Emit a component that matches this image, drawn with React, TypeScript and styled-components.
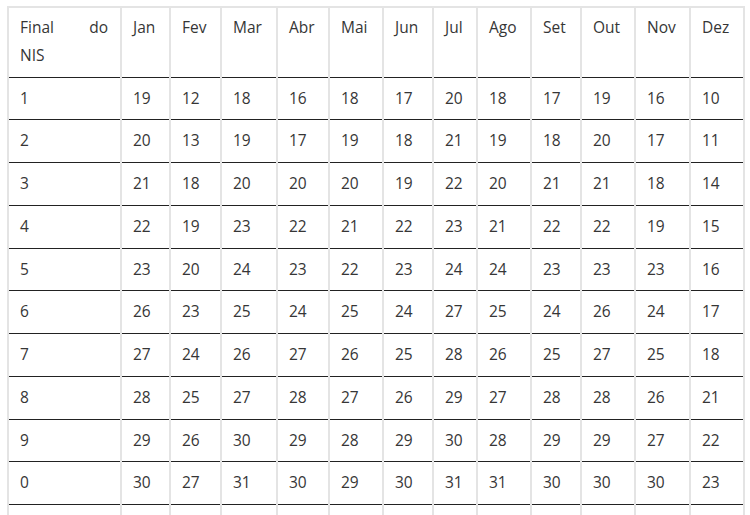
import React from 'react'
import styled, {createGlobalStyle} from 'styled-components'

const months = ['Jan', 'Fev', 'Mar', 'Abr', 'Mai', 'Jun', 'Jul', 'Ago', 'Set', 'Out', 'Nov', 'Dez']
const colWidths = [113, 49, 51, 56, 52, 54, 50, 44, 54, 50, 54, 55, 54]

const rows: [string, number[]][] = [
	['1', [19, 12, 18, 16, 18, 17, 20, 18, 17, 19, 16, 10]],
	['2', [20, 13, 19, 17, 19, 18, 21, 19, 18, 20, 17, 11]],
	['3', [21, 18, 20, 20, 20, 19, 22, 20, 21, 21, 18, 14]],
	['4', [22, 19, 23, 22, 21, 22, 23, 21, 22, 22, 19, 15]],
	['5', [23, 20, 24, 23, 22, 23, 24, 24, 23, 23, 23, 16]],
	['6', [26, 23, 25, 24, 25, 24, 27, 25, 24, 26, 24, 17]],
	['7', [27, 24, 26, 27, 26, 25, 28, 26, 25, 27, 25, 18]],
	['8', [28, 25, 27, 28, 27, 26, 29, 27, 28, 28, 26, 21]],
	['9', [29, 26, 30, 29, 28, 29, 30, 28, 29, 29, 27, 22]],
	['0', [30, 27, 31, 30, 29, 30, 31, 31, 30, 30, 30, 23]],
]

const GlobalStyle = createGlobalStyle`
	body {
		margin: 0;
		background: #fff;
		font-family: 'Open Sans', 'Liberation Sans', sans-serif;
		overflow: hidden;
	}
`

const Page = styled.main`
	padding: 6px 7px 0 7px;
`

const Table = styled.table`
	width: 736px;
	table-layout: fixed;
	border-collapse: collapse;
	font-size: 15.5px;
	line-height: 27.75px;
	color: #363636;
	border-top: 2px solid #e4e4e4;
`

const Head = styled.th`
	font-weight: 400;
	text-align: left;
	vertical-align: top;
	padding: 6px 12px 7px 11px;
	border-left: 2px solid #e4e4e4;
	border-right: 2px solid #e4e4e4;
	border-bottom: 1px solid #222;
`

const FirstHead = styled(Head)`
	text-align: justify;
	text-align-last: left;
`

// forces the last word onto its own line so "Final do" justifies
const LastWord = styled.span`
	display: inline-block;
	width: 100%;
`

const Cell = styled.td`
	text-align: left;
	padding: 7px 12px 7px 11px;
	border-left: 2px solid #e4e4e4;
	border-right: 2px solid #e4e4e4;
	border-bottom: 1px solid #222;
	white-space: nowrap;
`

// the table carries on past the bottom of the frame
const BlankCell = styled(Cell)`
	border-bottom: none;
	padding: 0;
	height: 10px;
	line-height: 0;
`

export default function App() {
	return (
		<Page>
			<GlobalStyle />
			<Table>
				<colgroup>
					{colWidths.map((w, i) => (
						<col key={i} style={{width: w}} />
					))}
				</colgroup>
				<thead>
					<tr>
						<FirstHead>
							Final do <LastWord>NIS</LastWord>
						</FirstHead>
						{months.map((m) => (
							<Head key={m}>{m}</Head>
						))}
					</tr>
				</thead>
				<tbody>
					{rows.map(([nis, days]) => (
						<tr key={nis}>
							<Cell>{nis}</Cell>
							{days.map((d, i) => (
								<Cell key={i}>{d}</Cell>
							))}
						</tr>
					))}
					<tr>
						<BlankCell />
						{months.map((m) => (
							<BlankCell key={m} />
						))}
					</tr>
				</tbody>
			</Table>
		</Page>
	)
}
